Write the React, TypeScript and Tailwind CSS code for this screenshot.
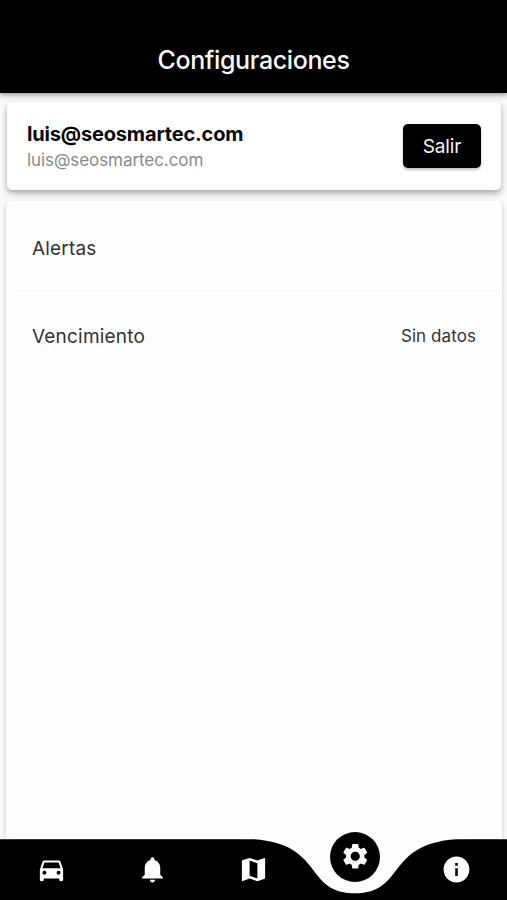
import { MdDirectionsCar, MdInfo, MdMap, MdNotifications, MdSettings } from "react-icons/md";

const tabs = [
  { label: "Vehículos", Icon: MdDirectionsCar },
  { label: "Notificaciones", Icon: MdNotifications },
  { label: "Mapa", Icon: MdMap },
  { label: "Configuraciones", Icon: MdSettings },
  { label: "Información", Icon: MdInfo },
];
const activeTab = 3;

function BottomBar() {
  return (
    <nav className="relative h-[61px] shrink-0 text-white">
      <svg className="absolute inset-0 h-full w-full" viewBox="0 0 507 61" preserveAspectRatio="none">
        <path d="M240 0H470V61H240Z" fill="#fefefe" />
        <path
          d="M0 0.2H253.5C324.5 4.8 304.2 54.3 354.9 54.3C405.6 54.3 385.3 4.8 456.3 0.2H507V61H0Z"
          fill="#000"
        />
      </svg>
      <div className="relative grid h-full grid-cols-5">
        {tabs.map(({ label, Icon }, i) => (
          <button key={label} aria-label={label} className="flex items-start justify-center">
            {i === activeTab ? (
              <span className="-mt-[7.5px] ml-[0.6px] flex size-[50.4px] items-center justify-center rounded-full bg-black">
                <Icon size={30.5} />
              </span>
            ) : (
              <Icon size={31} className="mt-[15px] ml-[1px]" />
            )}
          </button>
        ))}
      </div>
    </nav>
  );
}

export default function App() {
  return (
    <div className="flex h-[900px] w-[507px] flex-col overflow-hidden bg-[#fafafa] font-['Inter',sans-serif]">
      <header className="relative z-10 flex h-[93px] shrink-0 items-end justify-center bg-black pb-[17px] shadow-[0_2px_5px_rgba(0,0,0,0.4)]">
        <h1 className="text-[25px] leading-[32px] font-medium tracking-[-0.38px] text-[#fafafa]">Configuraciones</h1>
      </header>

      <main className="flex min-h-0 flex-1 flex-col">
        <section className="mt-[9px] mr-[6px] ml-[7px] flex h-[88px] shrink-0 items-center justify-between rounded-[5px] bg-white px-[20px] shadow-[0_3px_6px_rgba(0,0,0,0.35)]">
          <div>
            <p className="text-[20px] leading-[28px] font-bold tracking-[-0.17px] text-[#080808]">luis@seosmartec.com</p>
            <p className="text-[17px] leading-[24px] tracking-[-0.07px] text-[#8a8a8a]">luis@seosmartec.com</p>
          </div>
          <button className="h-[44px] w-[78px] rounded-[5px] bg-black pt-[2px] text-[19px] tracking-[-0.1px] text-[#f5f5f5] shadow-[0_2px_3px_rgba(0,0,0,0.25)]">
            Salir
          </button>
        </section>

        <section className="mt-[11px] mr-[5px] ml-[6px] flex-1 rounded-t-[5px] bg-[#fefefe] text-[#333] shadow-[0_2px_5px_rgba(0,0,0,0.2)]">
          <div className="mx-[5px] flex h-[91px] items-center border-b border-[#f7f7f7] px-[21px] pt-[6px] text-[19px] tracking-[0.18px]">
            Alertas
          </div>
          <div className="mx-[5px] flex h-[90px] items-center justify-between px-[21px]">
            <span className="text-[19px] tracking-[0.2px]">Vencimiento</span>
            <span className="text-[17px] tracking-[0.08px]">Sin datos</span>
          </div>
        </section>
      </main>

      <BottomBar />
    </div>
  );
}
